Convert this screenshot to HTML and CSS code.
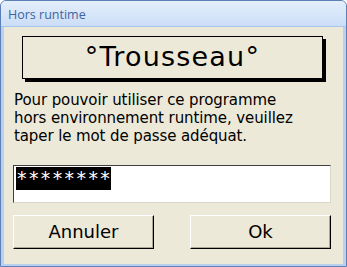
FILE: index.html
```html
<!DOCTYPE html>
<html>
<head>
<meta charset="utf-8">
<link rel="stylesheet" href="styles.css">
</head>
<body>
<div class="window">
  <div class="titlebar">Hors runtime</div>
  <div class="client">
    <div class="banner">°Trousseau°</div>
    <p class="message">Pour pouvoir utiliser ce programme<br>hors environnement runtime, veuillez<br>taper le mot de passe adéquat.</p>
    <div class="field"><span class="sel">********</span></div>
    <div class="buttons">
      <div class="btn">Annuler</div>
      <div class="btn">Ok</div>
    </div>
  </div>
</div>
</body>
</html>
```
FILE: styles.css
```css
html, body {
  margin: 0;
  padding: 0;
  background: #ffffff;
}
.window {
  width: 347px;
  height: 267px;
  box-sizing: border-box;
  border: 1px solid #5d7fb6;
  border-radius: 6px 6px 0 0;
  background: #b9d0ef;
  display: flex;
  flex-direction: column;
  overflow: hidden;
}
.titlebar {
  height: 26px;
  flex: none;
  box-sizing: border-box;
  padding: 5px 0 0 7px;
  font-family: "Open Sans", "DejaVu Sans", sans-serif;
  font-size: 12.5px;
  color: #3c64a3;
  background: linear-gradient(#e4eefb, #cbdef6);
  border-bottom: 1px solid #a7c5ee;
}
.client {
  flex: 1;
  margin: 0 3px 3px 3px;
  background: #ece9d8;
  box-sizing: border-box;
  padding: 9px 12px 15px 9px;
  display: flex;
  flex-direction: column;
  font-family: "DejaVu Sans", sans-serif;
}
.banner {
  margin: 0 0 0 9px;
  width: 301px;
  height: 43px;
  box-sizing: border-box;
  border: 1px solid #000;
  box-shadow: 3px 3px 0 #000;
  font-size: 27px;
  letter-spacing: 1.2px;
  line-height: 40px;
  text-align: center;
  color: #000;
}
.message {
  margin: 12px 0 0 1px;
  font-size: 15px;
  letter-spacing: -0.1px;
  line-height: 18px;
  white-space: nowrap;
  color: #000;
}
.field {
  margin-top: 20px;
  height: 38px;
  width: 318px;
  box-sizing: border-box;
  background: #fff;
  border-top: 1px solid #404040;
  border-left: 1px solid #404040;
  border-right: 1px solid #d8d6c8;
  border-bottom: 1px solid #d8d6c8;
  padding: 1px 0 0 2px;
}
.sel {
  display: inline-block;
  background: #000;
  color: #fff;
  font-size: 19px;
  line-height: 23px;
  height: 23px;
  letter-spacing: 2.4px;
  padding-left: 1px;
  width: 95px;
  box-sizing: border-box;
  overflow: hidden;
}
.buttons {
  margin-top: 12px;
  display: flex;
  justify-content: space-between;
  width: 318px;
}
.btn {
  width: 141px;
  height: 34px;
  box-sizing: border-box;
  border-top: 1px solid #fff;
  border-left: 1px solid #fff;
  border-right: 1px solid #000;
  border-bottom: 1px solid #000;
  box-shadow: inset -1px -1px 0 #aca899;
  font-size: 18px;
  line-height: 31px;
  text-align: center;
  color: #000;
}
```
